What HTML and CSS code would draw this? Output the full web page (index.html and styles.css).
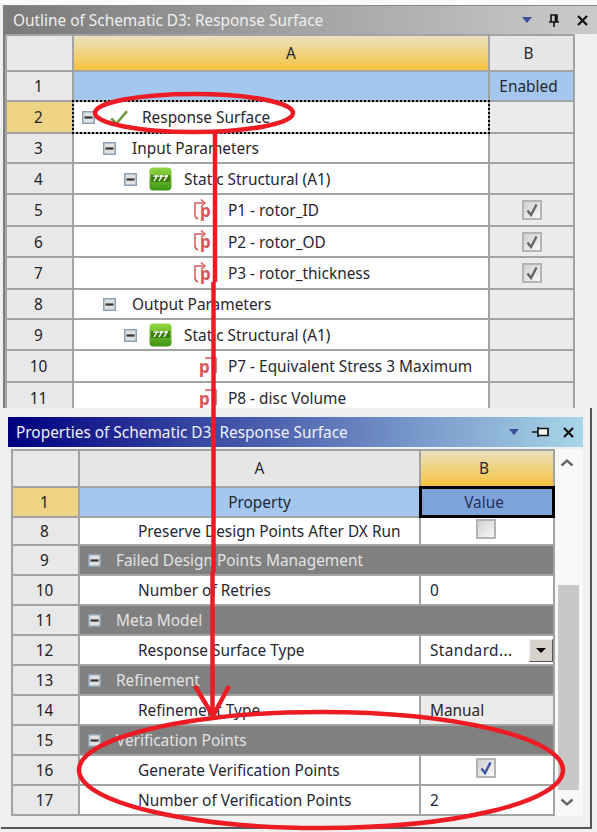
FILE: index.html
```html
<!DOCTYPE html>
<html>
<head>
    <title>Outline of Schematic D3</title>
    <link rel="stylesheet" href="styles.css">
</head>
<body>
    <svg class="defs" width="0" height="0">
        <symbol id="expander" viewBox="0 0 13 13">
            <rect x="0.75" y="0.75" width="11.5" height="11.5" fill="#e2e2e2" stroke="#8aa1b6" stroke-width="1.5"/>
            <rect x="2.5" y="5.4" width="8" height="2.2" fill="#333"/>
        </symbol>
        <symbol id="tick" viewBox="0 0 18 15">
            <path d="M1.2 8.5 L6.5 13.5 L17 1.2" fill="none" stroke="#6f9a45" stroke-width="2.6"/>
        </symbol>
        <symbol id="struct" viewBox="0 0 23 24">
            <rect x="0.5" y="0.5" width="22" height="23" rx="4" fill="url(#struct-fill)"/>
            <rect x="2" y="8" width="19" height="7" fill="#3c7f10"/>
            <path d="M5 14 L8 9 H6 M10 14 L13 9 H11 M15 14 L18 9 H16" fill="none" stroke="#fff" stroke-width="1.4"/>
            <rect x="4" y="8.6" width="15" height="1" fill="#fff"/>
        </symbol>
        <symbol id="param-in" viewBox="0 0 18 24">
            <path d="M5 20 C3 19 2 18 2 16 V4 H10" fill="none" stroke="#d8565a" stroke-width="1.5"/>
            <path d="M8 0.5 L12 4 L8 7.5" fill="none" stroke="#d8565a" stroke-width="1.5"/>
        </symbol>
        <symbol id="param-out" viewBox="0 0 18 24">
            <path d="M6 3 H17 V18" fill="none" stroke="#d8565a" stroke-width="1.5"/>
        </symbol>
        <symbol id="check" viewBox="0 0 16 16">
            <path d="M3.5 8.5 L7 13 L12.5 2.5" fill="none" stroke="currentColor" stroke-width="2.4"/>
        </symbol>
        <linearGradient id="struct-fill" x1="0" y1="0" x2="0" y2="1">
            <stop offset="0" stop-color="#93d742"/>
            <stop offset="1" stop-color="#3e9412"/>
        </linearGradient>
    </svg>

    <div class="top-strip"></div>

    <!-- upper pane -->
    <div class="outline-pane">
        <div class="titlebar titlebar-grey">
            <span class="title">Outline of Schematic D3: Response Surface</span>
            <span class="btn-tri"></span>
            <svg class="btn-pin" width="12" height="13" viewBox="0 0 12 13"><path d="M3 1H9V8H3Z M1 8H11 M6 8V13 M7.5 1.5V7.5" fill="none" stroke="#111" stroke-width="1.6"/></svg>
            <svg class="btn-x" width="11" height="11" viewBox="0 0 11 11"><path d="M1 1L10 10M10 1L1 10" stroke="#111" stroke-width="2.2"/></svg>
        </div>
        <div class="grid outline-grid">
            <div class="cell num"></div>
            <div class="cell col-sel">A</div>
            <div class="cell col">B</div>

            <div class="cell num">1</div>
            <div class="cell blue"></div>
            <div class="cell blue center">Enabled</div>

            <div class="cell num num-sel">2</div>
            <div class="cell tree focus indent-0"><svg class="exp"><use href="#expander"/></svg><svg class="ic-tick"><use href="#tick"/></svg><span>Response Surface</span></div>
            <div class="cell off"></div>

            <div class="cell num">3</div>
            <div class="cell tree indent-1"><svg class="exp"><use href="#expander"/></svg><span>Input Parameters</span></div>
            <div class="cell off"></div>

            <div class="cell num">4</div>
            <div class="cell tree indent-2"><svg class="exp"><use href="#expander"/></svg><svg class="ic-struct"><use href="#struct"/></svg><span>Static Structural (A1)</span></div>
            <div class="cell off"></div>

            <div class="cell num">5</div>
            <div class="cell tree indent-3"><i class="param param-i"><svg><use href="#param-in"/></svg><b>p</b></i><span>P1 - rotor_ID</span></div>
            <div class="cell off box-cell"><span class="checkbox grey-check"><svg><use href="#check"/></svg></span></div>

            <div class="cell num">6</div>
            <div class="cell tree indent-3"><i class="param param-i"><svg><use href="#param-in"/></svg><b>p</b></i><span>P2 - rotor_OD</span></div>
            <div class="cell off box-cell"><span class="checkbox grey-check"><svg><use href="#check"/></svg></span></div>

            <div class="cell num">7</div>
            <div class="cell tree indent-3"><i class="param param-i"><svg><use href="#param-in"/></svg><b>p</b></i><span>P3 - rotor_thickness</span></div>
            <div class="cell off box-cell"><span class="checkbox grey-check"><svg><use href="#check"/></svg></span></div>

            <div class="cell num">8</div>
            <div class="cell tree indent-1"><svg class="exp"><use href="#expander"/></svg><span>Output Parameters</span></div>
            <div class="cell off"></div>

            <div class="cell num">9</div>
            <div class="cell tree indent-2"><svg class="exp"><use href="#expander"/></svg><svg class="ic-struct"><use href="#struct"/></svg><span>Static Structural (A1)</span></div>
            <div class="cell off"></div>

            <div class="cell num">10</div>
            <div class="cell tree indent-4"><i class="param param-o"><svg><use href="#param-out"/></svg><b>p</b></i><span>P7 - Equivalent Stress 3 Maximum</span></div>
            <div class="cell off"></div>

            <div class="cell num">11</div>
            <div class="cell tree indent-4"><i class="param param-o"><svg><use href="#param-out"/></svg><b>p</b></i><span>P8 - disc Volume</span></div>
            <div class="cell off"></div>
        </div>
    </div>

    <!-- lower pane -->
    <div class="props-pane">
        <div class="titlebar titlebar-blue">
            <span class="title">Properties of Schematic D3: Response Surface</span>
            <span class="btn-tri"></span>
            <svg class="btn-pin" width="17" height="12" viewBox="0 0 17 12"><path d="M0 6H6 M6 1V11 M6 2.5H16V9.5H6" fill="#f4f4f4" stroke="#111" stroke-width="1.7"/></svg>
            <svg class="btn-x" width="11" height="11" viewBox="0 0 11 11"><path d="M1 1L10 10M10 1L1 10" stroke="#111" stroke-width="2.2"/></svg>
        </div>
        <div class="props-body">
            <div class="grid props-grid">
                <div class="cell num"></div>
                <div class="cell col head-a">A</div>
                <div class="cell col-sel">B</div>

                <div class="cell num num-sel">1</div>
                <div class="cell blue head-a">Property</div>
                <div class="cell blue-sel center">Value</div>

                <div class="cell num">8</div>
                <div class="cell prop">Preserve Design Points After DX Run</div>
                <div class="cell white box-cell"><span class="checkbox"></span></div>

                <div class="cell num">9</div>
                <div class="cell section"><svg class="exp"><use href="#expander"/></svg>Failed Design Points Management</div>

                <div class="cell num">10</div>
                <div class="cell prop">Number of Retries</div>
                <div class="cell white val">0</div>

                <div class="cell num">11</div>
                <div class="cell section"><svg class="exp"><use href="#expander"/></svg>Meta Model</div>

                <div class="cell num">12</div>
                <div class="cell prop">Response Surface Type</div>
                <div class="cell white val combo"><span class="combo-text">Standard...</span><span class="combo-btn"></span></div>

                <div class="cell num">13</div>
                <div class="cell section"><svg class="exp"><use href="#expander"/></svg>Refinement</div>

                <div class="cell num">14</div>
                <div class="cell prop">Refinement Type</div>
                <div class="cell off val">Manual</div>

                <div class="cell num">15</div>
                <div class="cell section"><svg class="exp"><use href="#expander"/></svg>Verification Points</div>

                <div class="cell num">16</div>
                <div class="cell prop">Generate Verification Points</div>
                <div class="cell white box-cell"><span class="checkbox blue-check"><svg><use href="#check"/></svg></span></div>

                <div class="cell num">17</div>
                <div class="cell prop">Number of Verification Points</div>
                <div class="cell white val">2</div>
            </div>
            <div class="scrollbar">
                <svg class="chevron" width="14" height="9" viewBox="0 0 14 9"><path d="M1.5 7.5L7 2.5L12.5 7.5" fill="none" stroke="#666" stroke-width="2.4"/></svg>
                <div class="thumb"></div>
                <svg class="chevron" width="14" height="9" viewBox="0 0 14 9"><path d="M1.5 1.5L7 6.5L12.5 1.5" fill="none" stroke="#666" stroke-width="2.4"/></svg>
            </div>
        </div>
    </div>

    <!-- red marks drawn over the screenshot -->
    <svg class="marks" width="597" height="832" viewBox="0 0 597 832">
        <g fill="none" stroke="#ed1c24" stroke-width="4.5">
            <ellipse cx="194" cy="113" rx="99" ry="19"/>
            <path d="M215 132V282 M213.5 282V572 M212.5 572V716"/>
            <path d="M195 686L213 716L229 686"/>
            <ellipse cx="321" cy="770" rx="242" ry="58"/>
        </g>
    </svg>
</body>
</html>
```

FILE: styles.css
```css
html, body {
    margin: 0;
    padding: 0;
}
body {
    position: relative;
    width: 597px;
    height: 832px;
    overflow: hidden;
    background: #f0f0f0;
    font-family: "Noto Sans", sans-serif;
    font-size: 15.4px;
    color: #26262e;
}
.defs {
    position: absolute;
}
.marks {
    position: absolute;
    top: 0;
    left: 0;
}
.top-strip {
    height: 5px;
    background: #fafafa;
}

/* panes */
.outline-pane {
    height: 403px;
    margin-left: 3px;
    border-left: 2px solid #808080;
    overflow: hidden;
}
.props-pane {
    box-sizing: border-box;
    width: 591px;
    height: 421px;
    margin-left: 1px;
    padding: 9px 7px 0;
    background: #f0f0f0;
    border-right: 2px solid #555;
    border-bottom: 2px solid #555;
}

/* title bars */
.titlebar {
    display: flex;
    align-items: center;
    box-sizing: border-box;
    padding: 0 9px 0 8px;
}
.titlebar-grey {
    height: 29px;
    border-top: 1px solid #888;
    background: linear-gradient(to right, #7a7a7a, #cbcbcb);
    color: #efefef;
}
.titlebar-blue {
    width: 575px;
    height: 30px;
    background: linear-gradient(to right, #00007f, #a8d6e8);
    color: #f0f0f8;
}
.title {
    flex: 1;
}
.btn-tri {
    width: 0;
    height: 0;
    border-left: 5px solid transparent;
    border-right: 5px solid transparent;
    border-top: 6px solid #3f4d9a;
    margin-right: 16px;
}
.titlebar-blue .btn-tri {
    margin-right: 13px;
}
.btn-pin {
    margin-right: 17px;
}
.titlebar-blue .btn-pin {
    margin-right: 14px;
}

/* grids */
.grid {
    display: grid;
    gap: 2px;
    padding: 2px;
    background: #a3a3a3;
}
.outline-grid {
    width: 570px;
    box-sizing: border-box;
    grid-template-columns: 65px 414px 83px;
    grid-template-rows: 34px 28px 30px 28px 29px 30px 29px 30px 28px 29px 30px 30px;
}
.outline-grid .num, .outline-grid .tree {
    padding-top: 1px;
}
.props-body {
    display: flex;
    margin-top: 2px;
}
.props-grid {
    flex: none;
    box-sizing: border-box;
    width: 544px;
    margin-left: 3px;
    grid-template-columns: 65px 339px 132px;
    grid-template-rows: 35px 28px 26px 28px 28px 28px 28px 28px 28px 28px 28px 28px;
}
.cell {
    display: flex;
    align-items: center;
    min-width: 0;
    background: #fff;
    white-space: nowrap;
}
.num {
    justify-content: center;
    padding-right: 2px;
    background: #e8e8e8;
    color: #222;
}
.num-sel {
    background: #efd384;
}
.col, .col-sel {
    justify-content: center;
    padding-left: 20px;
    background: #e6e6e6;
}
.outline-grid .col, .props-grid .col-sel {
    padding: 0 6px 0 0;
}
.col-sel {
    background: linear-gradient(#ebe1c0, #f5c33d);
}
.head-a {
    justify-content: center;
    padding-left: 20px;
}
.blue {
    background: #a3c7ef;
}
.blue-sel {
    background: #7ea3da;
    outline: 3px solid #000;
    outline-offset: -1px;
    color: #26305a;
}
.center {
    justify-content: center;
    padding-right: 6px;
}
.off {
    background: #ebebeb;
}
.white {
    background: #fff;
}
.focus {
    outline: 2px dotted #000;
}

/* tree rows */
.exp {
    flex: none;
    width: 13px;
    height: 13px;
}
.indent-0 {
    padding-left: 8px;
}
.indent-0 .exp {
    margin-right: 15px;
}
.ic-tick {
    flex: none;
    width: 18px;
    height: 15px;
    margin-right: 14px;
}
.indent-1 {
    padding-left: 29px;
}
.indent-1 .exp {
    margin-right: 16px;
}
.indent-2 {
    padding-left: 50px;
}
.indent-2 .exp {
    margin-right: 12px;
}
.ic-struct {
    flex: none;
    width: 23px;
    height: 24px;
    margin-right: 12px;
}
.indent-3 {
    padding-left: 119px;
}
.indent-4 {
    padding-left: 125px;
}
.param {
    position: relative;
    flex: none;
    width: 18px;
    height: 24px;
}
.param svg {
    width: 18px;
    height: 24px;
}
.param b {
    position: absolute;
    top: 0;
    font-family: "Noto Sans", sans-serif;
    font-size: 17px;
    font-style: normal;
    color: #d8565a;
}
.param-i {
    margin-right: 17px;
}
.param-i b {
    left: 7px;
}
.param-o {
    margin-right: 11px;
}
.param-o b {
    left: 0;
}

/* property rows */
.prop {
    padding-left: 58px;
}
.section {
    grid-column: 2 / 4;
    padding-left: 8px;
    background: #808080;
    color: #e2e2e2;
}
.section .exp {
    margin-right: 15px;
}
.val {
    padding-left: 9px;
}
.combo {
    justify-content: space-between;
}
.combo-text {
    letter-spacing: 0.4px;
}
.combo-btn {
    position: relative;
    box-sizing: border-box;
    width: 24px;
    height: 23px;
    background: #d6d2ca;
    border: 1px solid;
    border-color: #f4f4f4 #555 #555 #f4f4f4;
}
.combo-btn::after {
    content: "";
    position: absolute;
    top: 8px;
    left: 6px;
    border-left: 5px solid transparent;
    border-right: 5px solid transparent;
    border-top: 5px solid #000;
}

/* check boxes */
.box-cell {
    justify-content: center;
}
.props-grid .box-cell {
    padding: 0 2px 4px 0;
}
.checkbox {
    display: flex;
    box-sizing: border-box;
    width: 20px;
    height: 20px;
    border: 2px solid #b4b4b4;
    background: linear-gradient(135deg, #d0d0d0, #f8f8f8);
}
.checkbox svg {
    width: 16px;
    height: 16px;
}
.grey-check {
    color: #666;
}
.blue-check {
    color: #3d55a8;
}

/* scrollbar */
.scrollbar {
    display: flex;
    flex-direction: column;
    align-items: center;
    width: 28px;
    background: #f8f8f8;
}
.chevron {
    flex: none;
    margin: 9px 0 0 -4px;
}
.chevron:last-child {
    margin: 8px 0 9px -4px;
}
.thumb {
    flex: 1;
    width: 21px;
    margin: 118px 1px 0 0;
    background: #c8c8c8;
}
```
